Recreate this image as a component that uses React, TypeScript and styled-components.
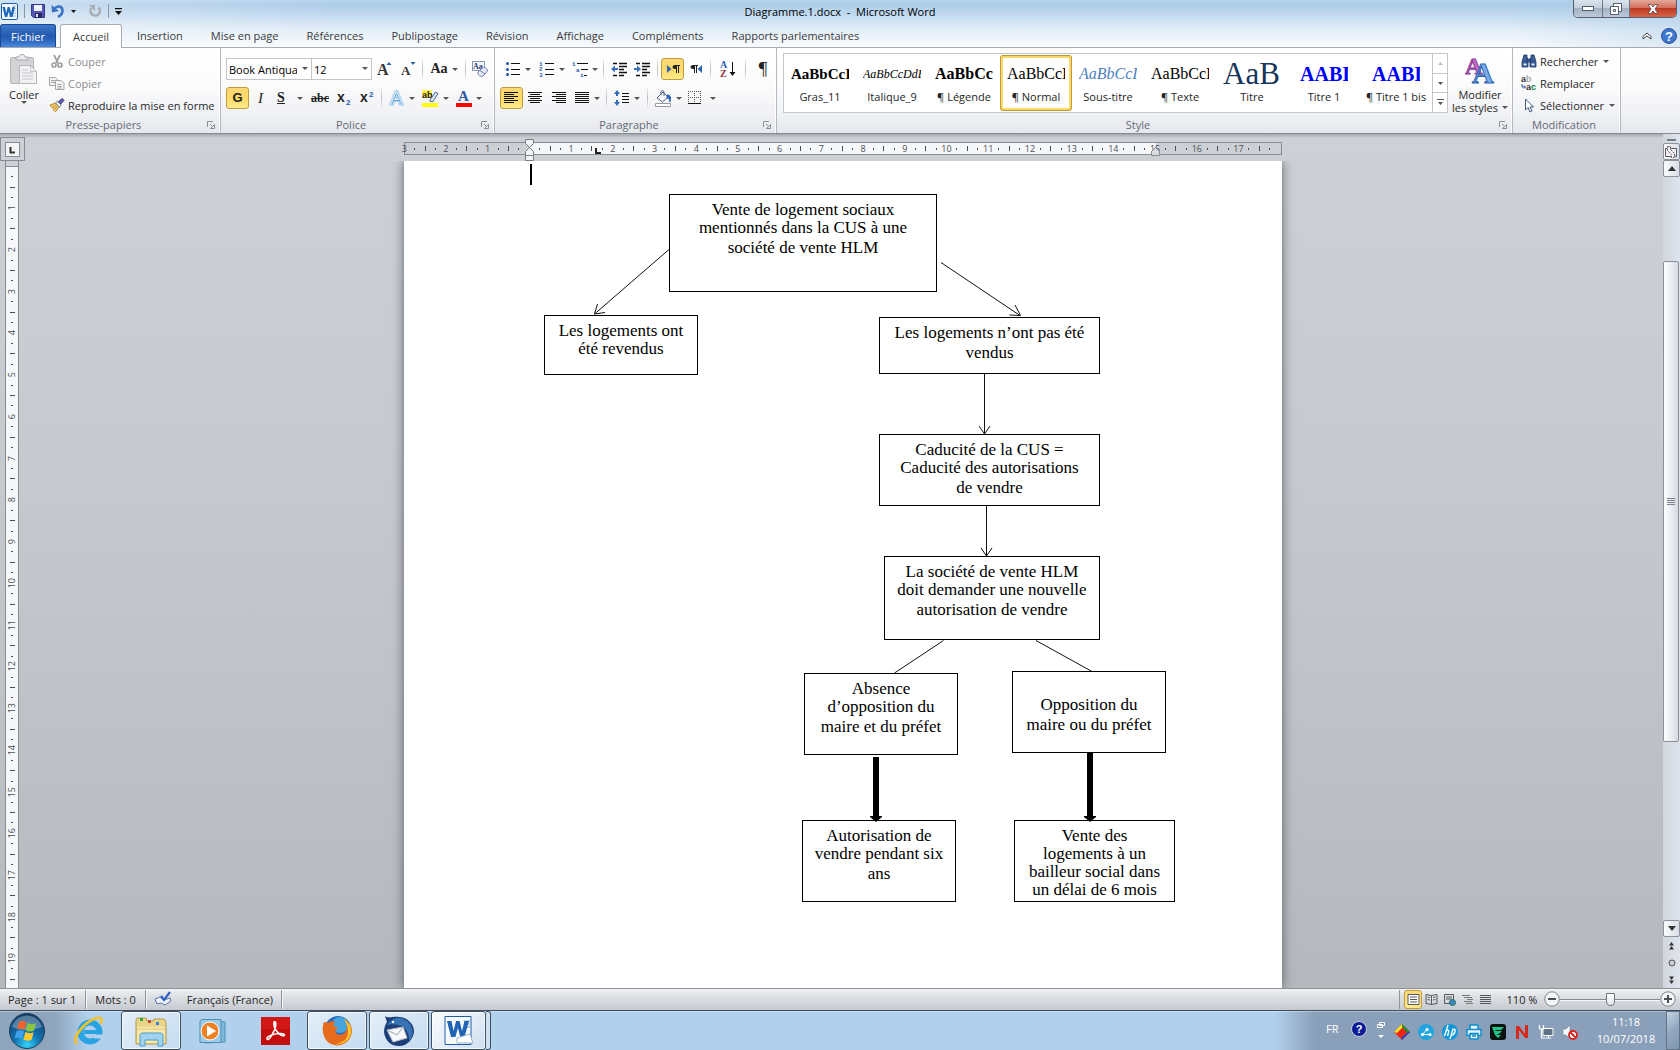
import React from "react";
import styled, { createGlobalStyle, css } from "styled-components";

const GlobalStyle = createGlobalStyle`
  * { box-sizing: border-box; }
  html, body { margin: 0; padding: 0; }
  body, button, select, input {
    font-family: "Open Sans", "Noto Sans", sans-serif;
    font-size: 11px;
    color: #262626;
  }
  button { margin: 0; padding: 0; border: 0; background: none; cursor: default; white-space: nowrap; }
  svg { display: block; flex: none; }
`;

const SERIF = '"Liberation Serif", serif';

/* ---------- window shell ---------- */

const Desktop = styled.div`
  display: flex;
  flex-direction: column;
  height: 100vh;
  overflow: hidden;
`;

const Chrome = styled.header`
  flex: none;
  background: linear-gradient(90deg, rgba(255, 255, 255, 0.35), rgba(255, 255, 255, 0) 20%, rgba(255, 255, 255, 0) 90%, rgba(160, 195, 225, 0.3)),
    linear-gradient(#b6d3ee, #aecdea 5px, #c4dbf0 16px, #e0ecf7 28px, #f9fbfd 47px);
`;

const TitleBar = styled.div`
  display: grid;
  grid-template-columns: 1fr auto 1fr;
  height: 24px;
`;

const QuickAccess = styled.div`
  display: flex;
  align-items: center;
  gap: 6px;
  padding-left: 1px;
  height: 22px;
`;

const Bar = styled.span`
  width: 1px;
  height: 14px;
  background: #8b97a5;
`;

const Title = styled.h1`
  margin: 0;
  font-size: 11px;
  font-weight: 400;
  line-height: 24px;
  color: #000;
  white-space: pre;
`;

const WindowButtons = styled.div`
  display: flex;
  justify-self: end;
  height: 18px;
  margin-right: 3px;
  border: 1px solid #56606c;
  border-top: 0;
  border-radius: 0 0 5px 5px;
  overflow: hidden;
`;

const WindowButton = styled.button<{ $w: number; $close?: boolean }>`
  display: flex;
  align-items: center;
  justify-content: center;
  width: ${(p) => p.$w}px;
  border-left: 1px solid #6b7684;
  background: ${(p) =>
    p.$close
      ? "linear-gradient(#e3a99c, #d4705c 45%, #bd3a22 50%, #d8654a)"
      : "linear-gradient(#dbe4ee, #c3cfdd 45%, #a3b2c3 50%, #bccadb)"};
  &:first-child { border-left: 0; }
`;

const TabStrip = styled.nav`
  display: flex;
  align-items: stretch;
  height: 24px;
  border-bottom: 1px solid #a8acb2;
`;

const FileTab = styled.button`
  width: 56px;
  border: 1px solid #1b4a96;
  border-bottom: 0;
  border-radius: 3px 3px 0 0;
  margin-right: 4px;
  background: linear-gradient(#3f78cb, #235aaf 50%, #2a66bd 70%, #4a8ade);
  color: #fff;
`;

const Tab = styled.button<{ $active?: boolean }>`
  padding: 0 14px 1px;
  color: #3b3b3b;
  ${(p) =>
    p.$active &&
    css`
      padding: 0 12px 1px;
      margin: 0 1px -1px 0;
      border: 1px solid #a8acb2;
      border-bottom: 0;
      border-radius: 3px 3px 0 0;
      background: #fff;
    `}
`;

const TabTools = styled.div`
  display: flex;
  align-items: center;
  gap: 9px;
  margin-left: auto;
  padding-right: 3px;
`;

/* ---------- ribbon ---------- */

const Ribbon = styled.div`
  display: flex;
  flex: none;
  height: 86px;
  border-bottom: 1px solid #868b92;
  background: linear-gradient(#fff, #fbfbfc 45%, #f1f2f5 75%, #e5e8ed);
`;

const Group = styled.section<{ $w: number }>`
  display: flex;
  flex-direction: column;
  width: ${(p) => p.$w}px;
  border-right: 1px solid #b4b8bf;
  box-shadow: inset -1px 0 #fff;
`;

const GroupBody = styled.div`
  display: flex;
  flex: 1;
  min-height: 0;
`;

const GroupFoot = styled.footer`
  display: flex;
  align-items: center;
  height: 17px;
  padding: 0 5px 0 0;
  color: #646a75;
  text-align: center;
`;

const GroupName = styled.span`
  flex: 1;
`;

const Rows = styled.div`
  display: flex;
  flex-direction: column;
  gap: 7px;
  padding: 10px 0 0 5px;
`;

const Row = styled.div`
  display: flex;
  align-items: center;
  height: 22px;
`;

const Tool = styled.button<{ $w: number; $on?: boolean }>`
  display: flex;
  align-items: center;
  justify-content: center;
  gap: 4px;
  width: ${(p) => p.$w}px;
  height: 22px;
  border-radius: 3px;
  ${(p) =>
    p.$on &&
    css`
      border: 1px solid #c29b3a;
      background: linear-gradient(#fbd977, #fcd966 45%, #fee98a);
    `}
`;

const Sep = styled.span`
  width: 1px;
  height: 20px;
  margin: 0 3px;
  background: linear-gradient(#eceef0, #b9bdc3 50%, #eceef0);
`;

const Caret = styled.span`
  flex: none;
  width: 0;
  height: 0;
  border: 3px solid transparent;
  border-top-color: #555;
  border-bottom: 0;
`;

const Combo = styled.label<{ $w: number }>`
  position: relative;
  width: ${(p) => p.$w}px;
  height: 22px;
  & + & { margin-left: -1px; }
  &::after {
    content: "";
    position: absolute;
    right: 4px;
    top: 9px;
    border: 3px solid transparent;
    border-top-color: #555;
    border-bottom: 0;
    pointer-events: none;
  }
`;

const ComboSelect = styled.select`
  appearance: none;
  width: 100%;
  height: 100%;
  padding: 0 14px 0 2px;
  border: 1px solid #c3c7cd;
  border-radius: 0;
  background: #fff;
  color: #000;
`;

const Glyph = styled.span<{ $size?: number; $b?: boolean; $i?: boolean; $sans?: boolean; $deco?: string }>`
  font-family: ${(p) => (p.$sans ? '"Liberation Sans", sans-serif' : SERIF)};
  font-size: ${(p) => p.$size ?? 15}px;
  line-height: 18px;
  font-weight: ${(p) => (p.$b ? 700 : 400)};
  font-style: ${(p) => (p.$i ? "italic" : "normal")};
  text-decoration: ${(p) => p.$deco ?? "none"};
  color: #222;
`;

const BigButton = styled.button<{ $w: number }>`
  display: flex;
  flex-direction: column;
  align-items: center;
  width: ${(p) => p.$w}px;
  padding-top: 4px;
  line-height: 13px;
`;

const BigLabel = styled.span`
  display: flex;
  align-items: center;
  gap: 4px;
`;

const IconSlot = styled.span`
  display: flex;
  align-items: center;
  justify-content: center;
  height: 36px;
`;

const Commands = styled.div<{ $pad?: number }>`
  display: flex;
  flex-direction: column;
  padding: 2px 0 0 ${(p) => p.$pad ?? 1}px;
`;

const Command = styled.button`
  display: flex;
  align-items: center;
  gap: 3px;
  height: 22px;
  & > ${Caret} { margin-left: 2px; }
  &:disabled { color: #8e8e8e; }
`;

const Gallery = styled.div`
  display: flex;
  height: 60px;
  margin: 5px 0 0 6px;
  border: 1px solid #c3c6cb;
  background: #fff;
`;

const StyleCard = styled.button<{ $on?: boolean }>`
  display: flex;
  flex-direction: column;
  align-items: center;
  width: 72px;
  margin: 1px 0;
  padding: 2px 3px 0;
  border: 3px solid transparent;
  ${(p) =>
    p.$on &&
    css`
      border-color: #fbd968;
      border-radius: 3px;
      outline: 1px solid #c4983a;
      outline-offset: -1px;
    `}
`;

const Sample = styled.span<{ $size: number; $w?: number; $b?: boolean; $i?: boolean; $color?: string }>`
  display: flex;
  align-items: center;
  width: ${(p) => p.$w ?? 58}px;
  height: 28px;
  overflow: hidden;
  font-family: ${SERIF};
  font-size: ${(p) => p.$size}px;
  line-height: 30px;
  font-weight: ${(p) => (p.$b ? 700 : 400)};
  font-style: ${(p) => (p.$i ? "italic" : "normal")};
  color: ${(p) => p.$color ?? "#000"};
`;

const StyleName = styled.span`
  line-height: 17px;
`;

const GalleryScroll = styled.div`
  display: flex;
  flex-direction: column;
  width: 15px;
  border-left: 1px solid #c3c6cb;
`;

const GalleryButton = styled.button`
  display: flex;
  flex: 1;
  align-items: center;
  justify-content: center;
  & + & { border-top: 1px solid #c3c6cb; }
`;

/* ---------- document area ---------- */

const Workspace = styled.main`
  display: grid;
  flex: 1;
  grid-template-columns: 25px 1fr 17px;
  min-height: 0;
  overflow: hidden;
  background: linear-gradient(#a4a8ae, #cdd1d6 4px, #c6c9ce 40%, #b5b9be);
`;

const LeftRail = styled.div`
  display: flex;
  flex-direction: column;
  min-height: 0;
  padding-top: 3px;
`;

const TabSelector = styled.button`
  display: flex;
  flex: none;
  align-items: center;
  justify-content: center;
  width: 25px;
  height: 24px;
  border: 1px solid #868c96;
  background: #cdd1d6;
`;

const VerticalRuler = styled.div`
  flex: 1;
  width: 14px;
  min-height: 0;
  margin-left: 5px;
  overflow: hidden;
  border: 1px solid #868c96;
  border-top: 0;
  border-bottom: 0;
  background: linear-gradient(#cdd1d6 5px, #868c96 5px, #868c96 6px, #f6f7f8 6px);
`;

const VerticalScale = styled.div`
  display: grid;
  grid-template-rows: repeat(20, minmax(0, 1fr));
  height: 834px;
`;

const VerticalCm = styled.div`
  display: grid;
  grid-template-rows: repeat(4, minmax(0, 1fr));
  place-items: center;
`;

const UpNumber = styled.span`
  writing-mode: vertical-rl;
  transform: rotate(180deg);
  font-size: 9px;
  line-height: 12px;
  color: #4b4f55;
`;

const Mark = styled.i<{ $w: number; $h: number }>`
  width: ${(p) => p.$w}px;
  height: ${(p) => p.$h}px;
  background: #4b4f55;
`;

const Centre = styled.div`
  display: flex;
  flex-direction: column;
  align-items: center;
  min-width: 0;
  min-height: 0;
  padding-right: 2px;
  overflow: hidden;
`;

const RulerBand = styled.div`
  position: relative;
  flex: none;
  width: 878px;
  height: 27px;
  padding-top: 8px;
`;

const HorizontalRuler = styled.div`
  height: 13px;
  border: 1px solid #868c96;
  background: linear-gradient(90deg, transparent 125px, #f6f7f8 125px, #f6f7f8 751px, transparent 751px);
`;

const HorizontalScale = styled.div`
  display: grid;
  grid-template-columns: repeat(21, 1fr);
  height: 11px;
  margin: 0 6px 0 -6px;
`;

const HorizontalCm = styled.div`
  display: grid;
  grid-template-columns: repeat(4, 1fr);
  place-items: center;
`;

const RulerNumber = styled.span`
  font-size: 9px;
  line-height: 11px;
  color: #4b4f55;
`;

const IndentMark = styled.span<{ $x: number; $y: number }>`
  position: absolute;
  left: ${(p) => p.$x}px;
  top: ${(p) => p.$y}px;
`;

const Canvas = styled.div`
  display: flex;
  flex: 1;
  justify-content: center;
  align-self: stretch;
  min-height: 0;
  overflow: hidden;
`;

const Paper = styled.article`
  position: relative;
  flex: none;
  width: 878px;
  background: #fff;
  box-shadow: 0 0 2px #8b8f95, 0 0 11px rgba(60, 65, 72, 0.75);
`;

const Cursor = styled.span`
  position: absolute;
  left: 126px;
  top: 3px;
  width: 2px;
  height: 21px;
  background: #000;
`;

const Connectors = styled.svg`
  position: absolute;
  left: 0;
  top: 0;
`;

const Node = styled.div<{ $x: number; $y: number; $w: number; $h: number; $blank?: boolean }>`
  position: absolute;
  left: ${(p) => p.$x}px;
  top: ${(p) => p.$y}px;
  width: ${(p) => p.$w}px;
  height: ${(p) => p.$h}px;
  padding-top: ${(p) => (p.$blank ? 24 : 6)}px;
  border: 1px solid #000;
  background: #fff;
  font-family: ${SERIF};
  font-size: 17px;
  line-height: 18px;
  color: #000;
  text-align: center;
  white-space: nowrap;
`;

const Line = styled.div<{ $tall?: boolean }>`
  line-height: ${(p) => (p.$tall ? 22 : 18)}px;
`;

/* ---------- scroll bar ---------- */

const ScrollRail = styled.div`
  display: flex;
  flex-direction: column;
  align-items: center;
  min-height: 0;
  padding-top: 3px;
  background: linear-gradient(90deg, #d2d6dd, #dfe3ec);
`;

const SplitHandle = styled.span`
  width: 9px;
  height: 2px;
  margin: 2px 0;
  background: #777b82;
`;

const RailButton = styled.button<{ $plain?: boolean }>`
  display: flex;
  flex: none;
  align-items: center;
  justify-content: center;
  width: 17px;
  height: 17px;
  ${(p) =>
    !p.$plain &&
    css`
      border: 1px solid #8b919c;
      border-radius: 2px;
      background: linear-gradient(90deg, #fbfcfd, #d9dde4);
    `}
`;

const Track = styled.div`
  display: flex;
  flex: 1;
  flex-direction: column;
  width: 17px;
  min-height: 0;
`;

const TrackSpace = styled.div<{ $grow: number }>`
  flex: ${(p) => p.$grow} 1 0;
`;

const Thumb = styled.div`
  display: flex;
  flex: 481 1 0;
  align-items: center;
  justify-content: center;
  width: 16px;
  border: 1px solid #8b919c;
  border-radius: 2px;
  background: linear-gradient(90deg, #fff, #eef1f4 40%, #d6dae2);
`;

/* ---------- status bar ---------- */

const StatusBar = styled.footer`
  display: flex;
  flex: none;
  align-items: center;
  height: 22px;
  padding-bottom: 1px;
  border-top: 1px solid #8e9298;
  background: linear-gradient(#f0f2f4, #dcdfe3 40%, #c6cad0);
`;

const StatusItem = styled.button`
  display: flex;
  align-items: center;
  gap: 15px;
  height: 19px;
  padding: 0 9px;
  border-right: 1px solid #8f949b;
  box-shadow: 1px 0 #f5f6f7;
  &:first-child { padding-left: 8px; }
  &:nth-child(3) { padding: 0 8px; }
`;

const StatusRight = styled.div`
  display: flex;
  align-items: center;
  margin-left: auto;
  height: 19px;
  padding: 0 4px;
  border-left: 1px solid #8f949b;
`;

const ViewButton = styled.button<{ $on?: boolean }>`
  display: flex;
  align-items: center;
  justify-content: center;
  width: 18px;
  height: 19px;
  border: 1px solid transparent;
  border-radius: 3px;
  ${(p) =>
    p.$on &&
    css`
      border-color: #c29b3a;
      background: linear-gradient(#fbd977, #fee98a);
    `}
`;

const ZoomText = styled.button`
  width: 40px;
  margin: 0 2px 0 8px;
  text-align: center;
`;

const ZoomSlider = styled.input`
  appearance: none;
  width: 100px;
  height: 17px;
  margin: 0;
  background: linear-gradient(transparent 8px, #858b94 8px, #858b94 9px, #f4f5f6 9px, #f4f5f6 10px, transparent 10px);
  &::-webkit-slider-thumb {
    appearance: none;
    width: 9px;
    height: 13px;
    border: 1px solid #6d737c;
    border-radius: 1px 1px 5px 5px;
    background: linear-gradient(#fff, #e3e6ea);
  }
`;

/* ---------- taskbar ---------- */

const Taskbar = styled.footer`
  display: flex;
  flex: none;
  align-items: stretch;
  height: 40px;
  border-top: 1px solid #3e4c5c;
  background: linear-gradient(rgba(255, 255, 255, 0.35) 1px, transparent 1px),
    linear-gradient(90deg, #8fa5bd, #8fa5bd 55px, #b1d0ec 88px, #b1d0ec calc(100% - 405px), #8aa0ba calc(100% - 365px), #8aa0ba);
`;

const StartButton = styled.button`
  display: flex;
  align-items: center;
  justify-content: center;
  width: 54px;
  margin-right: 5px;
`;

const TaskButton = styled.button<{ $open?: boolean; $active?: boolean }>`
  display: flex;
  align-items: center;
  justify-content: center;
  width: 60px;
  margin-right: 2px;
  border: 1px solid transparent;
  ${(p) =>
    p.$open &&
    css`
      border-color: #3f5064;
      border-radius: 3px;
      box-shadow: inset 0 0 0 1px rgba(255, 255, 255, 0.7);
      background: linear-gradient(135deg, rgba(255, 255, 255, 0.65), rgba(255, 255, 255, 0.25));
    `}
  ${(p) =>
    p.$active &&
    css`
      width: 55px;
      background: linear-gradient(135deg, #fafcfe, #cfe0f1);
    `}
`;

const StackEdge = styled.span`
  width: 5px;
  margin-left: -2px;
  border: 1px solid #3f5064;
  border-left: 0;
  border-radius: 0 3px 3px 0;
  background: #cfe0f1;
`;

const Tray = styled.div`
  display: flex;
  align-items: center;
  margin-left: auto;
  color: #fff;
`;

const TrayIcons = styled.div`
  display: flex;
  align-items: center;
  gap: 8px;
  padding: 2px 0 0 9px;
`;

const TrayButton = styled.button`
  display: flex;
  align-items: center;
  justify-content: center;
  width: 16px;
  height: 18px;
`;

const Language = styled.button`
  width: 25px;
  color: #fff;
  text-align: left;
`;

const LanguageTools = styled.div`
  display: flex;
  align-items: center;
  padding-bottom: 4px;
`;

const Clock = styled.time`
  display: block;
  width: 80px;
  margin-left: 8px;
  padding-bottom: 1px;
  line-height: 17px;
  text-align: center;
`;

const ShowDesktop = styled.button`
  align-self: stretch;
  width: 14px;
  border: 1px solid #5f7388;
  background: linear-gradient(135deg, #c5d4e3, #93a8c0 50%, #7f96b0);
`;

/* ---------- drawings ---------- */

const Launcher = () => (
  <svg width="8" height="8" viewBox="0 0 8 8" fill="none" stroke="#8a8e95">
    <path d="M.5 6V.5H6M3 3l3 3M7.5 3.5v4h-4z" />
  </svg>
);

const Word = () => (
  <svg width="17" height="17" viewBox="0 0 17 17">
    <rect x=".5" y=".5" width="16" height="16" rx="1.5" fill="#f4f9fe" stroke="#1f5ba8" />
    <path d="M11 3h4M12 5.500h3M13 8h2M12 10.500h3M11 13h4" stroke="#9ebfe4" />
    <path d="M1.500 4h2.500l1.200 6L6.700 4h2l1.400 6 1.300-6H14l-2.500 10H9L7.700 8.500 6.300 14H3.900z" fill="#1d66b8" />
  </svg>
);

const Save = () => (
  <svg width="14" height="14" viewBox="0 0 14 14">
    <path d="M.5.5h13v13h-11l-2-2z" fill="#5457b8" stroke="#34378c" />
    <path d="M3 1h8v6H3z" fill="#eef2fb" />
    <path d="M4 9h7v4.500H4z" fill="#27295f" />
    <path d="M5 10h2v3H5z" fill="#dfe3f4" />
  </svg>
);

const Undo = () => (
  <svg width="14" height="14" viewBox="0 0 14 14">
    <path d="M3 5.500C6 1 11.500 2 11.500 6.500c0 3-1.500 5-4.500 6.500" fill="none" stroke="#3d74c4" strokeWidth="2.600" />
    <path d="M.5 1l.500 7.500L8 7z" fill="#3d74c4" />
  </svg>
);

const Redo = () => (
  <svg width="14" height="14" viewBox="0 0 14 14">
    <path d="M10.500 3.500A4.700 4.700 0 1 1 3.500 4" fill="none" stroke="#a9adb3" strokeWidth="2.600" />
    <path d="M1 1h6v6L5 5z" fill="#a9adb3" />
  </svg>
);

const Paste = () => (
  <svg width="28" height="32" viewBox="0 0 28 32">
    <rect x=".5" y="3.500" width="23" height="26" rx="1.500" fill="#d3d4d6" stroke="#b3b4b7" />
    <path d="M6 6V3h3c0-3.500 6-3.500 6 0h3v3z" fill="#ececee" stroke="#a5a6a9" />
    <path d="M9.500 11.500h11l6 6v12h-17z" fill="#f2f2f4" stroke="#b6b7ba" />
    <path d="M20.500 11.500v6h6M12 16h6M12 19h11M12 22h11M12 25h11" fill="none" stroke="#c6c7ca" />
  </svg>
);

const Cut = () => (
  <svg width="16" height="16" viewBox="0 0 16 16" fill="none" stroke="#a0a1a4" strokeWidth="1.700">
    <path d="M5 2l4 8M11 2L7 10" />
    <circle cx="5" cy="12" r="2" />
    <circle cx="11" cy="12" r="2" />
  </svg>
);

const Copy = () => (
  <svg width="16" height="16" viewBox="0 0 16 16" fill="#f4f4f5" stroke="#a3a4a7">
    <path d="M.5 2.500h6l2 2v6h-8zM2 5.500h4M2 7.500h4" />
    <path d="M6.500 5.500h5.500l3 3v6H6.500zM8.500 9.500h4M8.500 11.500h4M8.500 13h4" />
  </svg>
);

const Brush = () => (
  <svg width="16" height="16" viewBox="0 0 17 16">
    <path d="M1 8l6-2 4 4-4 5c-2-.500-2-2-3-3.500C3 10 1.500 9.500 1 8z" fill="#f2cf6c" stroke="#b48a2c" />
    <path d="M4 9l4 4M6 8l3 3" stroke="#b48a2c" />
    <path d="M7 5.500l2-1.500 4 4-2 2.500z" fill="#f5f6f8" stroke="#6f7580" />
    <path d="M10 4.500L14 1l2 2-3.500 4z" fill="#5f5fb0" stroke="#3a3c7e" />
  </svg>
);

const SizeA = ({ up }: { up?: boolean }) => (
  <svg width="15" height="18" viewBox="0 0 15 18">
    <text x="0" y="15" fontFamily="Liberation Serif" fontWeight="700" fontSize={up ? 16 : 13} fill="#333">A</text>
    <path d={up ? "M9.500 5h5L12 2z" : "M9.500 2h5L12 5z"} fill="#2e5ea8" />
  </svg>
);

const Eraser = () => (
  <svg width="17" height="18" viewBox="0 0 17 18">
    <rect x=".5" y="1.500" width="12" height="9" fill="#f5f8fd" stroke="#8797b5" />
    <text x="1" y="9" fontFamily="Liberation Serif" fontWeight="700" fontSize="8" fill="#27376b">Aa</text>
    <path d="M6 12l5-4.500c2-1 5 1.500 4.500 3.500L11 16c-2 1.500-6-1-5-4z" fill="#e1e7f5" stroke="#7483ac" />
    <path d="M8 10.500l5 3.500" stroke="#7483ac" />
  </svg>
);

const Script = ({ sup }: { sup?: boolean }) => (
  <svg width="14" height="18" viewBox="0 0 14 18" fontFamily="Liberation Sans" fontWeight="700">
    <text x="0" y="13" fontSize="14" fill="#222">x</text>
    <text x="9" y={sup ? 8 : 16} fontSize="8" fill="#2257ad">2</text>
  </svg>
);

const GlowA = () => (
  <svg width="17" height="18" viewBox="0 0 17 18">
    <text x="3" y="15" fontFamily="Liberation Sans" fontSize="16" fill="#fff" stroke="#a9d2f0" strokeWidth="3" paintOrder="stroke">A</text>
    <path d="M4 15l4.500-11L13 15M5.500 11.500h6" fill="none" stroke="#4a92cf" strokeWidth=".800" />
  </svg>
);

const Highlight = () => (
  <svg width="17" height="18" viewBox="0 0 17 18">
    <rect x="0" y="1" width="10" height="8" fill="#fff04c" />
    <text x="0" y="9" fontFamily="Liberation Sans" fontSize="9" fontWeight="700" fill="#222">ab</text>
    <path d="M8 11l5.500-8 2.500 1.500L11 12.500H8z" fill="#dbe7f6" stroke="#4b658e" />
    <rect x="0" y="14" width="16" height="4" fill="#ffff00" />
  </svg>
);

const FontColor = () => (
  <svg width="16" height="18" viewBox="0 0 16 18">
    <text x="2" y="12" fontFamily="Liberation Serif" fontWeight="700" fontSize="15" fill="#2d5a9e">A</text>
    <rect x="0" y="14" width="16" height="4" fill="#f00" />
  </svg>
);

const ListIcon = ({ kind }: { kind: "dot" | "num" | "multi" }) => (
  <svg width="16" height="16" viewBox="0 0 16 16" fontFamily="Liberation Mono" fontSize="6" fontWeight="700">
    {kind === "multi" ? (
      <>
        <path d="M5 2.500h11M9 8.500h7M12 14.500h3" stroke="#111" />
        <g fill="#2c5cab"><text x="0" y="5">1</text><text x="4" y="11">a</text><text x="8" y="16">i</text></g>
      </>
    ) : (
      <>
        <path d="M6 2.500h9M6 8.500h9M6 13.500h9" stroke="#111" />
        {kind === "dot" ? (
          <g fill="#2c5cab"><circle cx="2.500" cy="2.500" r="1.600" /><circle cx="2.500" cy="8.500" r="1.600" /><circle cx="2.500" cy="13.500" r="1.600" /></g>
        ) : (
          <g fill="#2c5cab"><text x="0" y="5">1</text><text x="0" y="10">2</text><text x="0" y="16">3</text></g>
        )}
      </>
    )}
  </svg>
);

const Indent = ({ out }: { out?: boolean }) => (
  <svg width="17" height="15" viewBox="0 0 17 15">
    <path d="M2 1.500h4M8 1.500h8M8 4.500h8M8 7.500h5M8 10.500h8M2 13.500h4M8 13.500h5" stroke="#111" strokeWidth="1.300" />
    <path d={out ? "M0 7l4-3.500v2.500h3v2H4v2.500z" : "M7 7L3 3.500V6H0v2h3v2.500z"} fill="#3d6fc0" />
  </svg>
);

const Pilcrow = ({ dir }: { dir: "ltr" | "rtl" }) => (
  <svg width="14" height="12" viewBox="0 0 14 12">
    <path d={dir === "ltr" ? "M1 2l4.500 4L1 10z" : "M13 2L8.500 6l4.500 4z"} fill="#2f65b8" />
    <path d={dir === "ltr" ? "M10 2.500H8.500a1.500 1.500 0 0 0 0 3H10z" : "M5 2.500H3.500a1.500 1.500 0 0 0 0 3H5z"} fill="#222" stroke="#222" />
    <path d={dir === "ltr" ? "M9 2.500h5M10.500 2v8M12.500 2v8" : "M4 2.500h5M5.500 2v8M7.500 2v8"} fill="none" stroke="#222" />
  </svg>
);

const SortIcon = () => (
  <svg width="16" height="18" viewBox="0 0 16 18" fontFamily="Liberation Serif" fontWeight="700" fontSize="10">
    <text x="0" y="8" fill="#2c5cab">A</text>
    <text x="0" y="17" fill="#93323c">Z</text>
    <path d="M12.500 2v12" stroke="#111" />
    <path d="M9.500 12h6l-3 4z" fill="#111" />
  </svg>
);

const AlignIcon = ({ kind }: { kind: "left" | "center" | "right" | "full" }) => {
  const x = { left: 0, center: 2, right: 4, full: 0 }[kind];
  const w = kind === "full" ? 14 : 10;
  return (
    <svg width="15" height="12" viewBox="0 0 15 12" fill="#111">
      {[0, 4, 8].map((y) => <rect key={y} x="0" y={y} width="14" height="1" />)}
      {[2, 6, 10].map((y) => <rect key={y} x={x} y={y} width={w} height="1" />)}
    </svg>
  );
};

const LineSpacing = () => (
  <svg width="16" height="16" viewBox="0 0 16 16">
    <path d="M8 3.500h7M8 6.500h7M8 9.500h7M8 12.500h7" stroke="#111" />
    <path d="M3 0l3 4H4v2H2V4H0zM3 16l-3-4h2v-2h2v2h2z" fill="#3369bb" />
  </svg>
);

const Bucket = () => (
  <svg width="17" height="17" viewBox="0 0 17 17">
    <path d="M2 8l6-6 5 5-5.500 5z" fill="#f4f7fb" stroke="#4d5f80" />
    <path d="M6 5V1.500c1-1.500 3-1 3 1V6" fill="none" stroke="#4d5f80" />
    <path d="M12 5c4 0 4 3 3 7-.500-3-1-4-3-4z" fill="#2f65b8" stroke="#2f65b8" />
    <path d="M.5 13.500h15v3H.5z" fill="#fff" stroke="#999" />
  </svg>
);

const Borders = () => (
  <svg width="14" height="14" viewBox="0 0 14 14" fill="none" stroke="#555">
    <path d="M.5 0v12M12.500 0v12M6.500 0v12M0 .5h13M0 6.500h13" strokeDasharray="1 1" />
    <path d="M0 12.500h13" stroke="#111" />
  </svg>
);

const ChangeStyles = () => (
  <svg width="31" height="31" viewBox="0 0 31 31" fontFamily="Liberation Serif" fontWeight="700">
    <text x="0" y="19" fontSize="24" fill="#c56bc4" stroke="#8f3f98">A</text>
    <text x="7" y="28" fontSize="30" fill="#79aeea" stroke="#2c62ae">A</text>
  </svg>
);

const Binoculars = () => (
  <svg width="16" height="14" viewBox="0 0 16 14" fill="#3c5c98" stroke="#1d3566" strokeWidth=".800">
    <path d="M3 1h3v2l1 3v7H1V8zM10 1h3l2 7v5H9V6l1-3z" />
    <path d="M6 5h4v3H6z" />
    <path d="M2.500 9.500h3v2h-3zM10.500 9.500h3v2h-3z" fill="#dfe9f8" stroke="none" />
  </svg>
);

const Replace = () => (
  <svg width="16" height="16" viewBox="0 0 16 16" fontFamily="Liberation Sans" fontWeight="700" fontSize="9">
    <text x="0" y="7" fill="#333">a<tspan fill="#aaa">b</tspan></text>
    <text x="5" y="15" fill="#333">a<tspan fill="#12833a">c</tspan></text>
    <path d="M1 9v3h3M3 10.500l1.500 1.500L3 13.500" fill="none" stroke="#234f96" />
  </svg>
);

const Pointer = () => (
  <svg width="16" height="15" viewBox="0 0 16 15">
    <path d="M4.500 1v11l2.500-2.500L9 14l2-1-2-4h3.500z" fill="#fff" stroke="#3d557f" />
  </svg>
);

const Triangle = ({ up, w = 8, c = "#333" }: { up?: boolean; w?: number; c?: string }) => (
  <svg width={w} height={w > 5 ? 5 : 3} viewBox="0 0 8 5" preserveAspectRatio="none">
    <path d={up ? "M0 5h8L4 0z" : "M0 0h8L4 5z"} fill={c} />
  </svg>
);

const DoubleTriangle = ({ up }: { up?: boolean }) => (
  <svg width="5" height="8" viewBox="0 0 7 8" preserveAspectRatio="none" fill="#333">
    <path d={up ? "M0 3.500h7L3.500 0zM0 7.500h7L3.500 4z" : "M0 .5h7L3.500 4zM0 4.500h7L3.500 8z"} />
  </svg>
);

const ZoomKnob = ({ plus }: { plus?: boolean }) => (
  <svg width="16" height="16" viewBox="0 0 16 16">
    <circle cx="8" cy="8" r="7.200" fill="#f4f5f7" stroke="#7c828b" />
    <path d={plus ? "M4 8h8M8 4v8" : "M4 8h8"} stroke="#4b5058" strokeWidth="2" />
  </svg>
);

const ProofIcon = () => (
  <svg width="18" height="16" viewBox="0 0 18 16">
    <path d="M1 8l5-2 4 3 6-2 1 3-6 4-4-2-4 1z" fill="#eef2fa" stroke="#5d73a8" />
    <path d="M7 5l3 4 6-8" fill="none" stroke="#2e62c4" strokeWidth="2.200" />
  </svg>
);

const ViewIcon = ({ kind }: { kind: number }) => (
  <svg width="13" height="13" viewBox="0 0 13 13" fill="none" stroke="#55595f">
    {kind === 0 && <path d="M1 1.500h11v10H1zM3 4h7M3 6.500h7M3 9h7" fill="#fff" />}
    {kind === 1 && <path d="M6.500 2.500L1 1.500v9l5.500 1 5.500-1v-9zM6.500 2.500v9M2.500 4l2.500.5M2.500 6.500l2.500.5M8 4.500l2.500-.5M8 7l2.500-.5" />}
    {kind === 2 && (
      <>
        <path d="M1.500 1.500h9v9h-9zM3 4h6M3 6h6" />
        <circle cx="9.500" cy="9.500" r="3" fill="#3c86c9" stroke="#2a7350" />
      </>
    )}
    {kind === 3 && <path d="M1 2.500h8M3 4.500h8M6 6.500h6M3 8.500h8M5 10.500h7" stroke="#777" />}
    {kind === 4 && <path d="M1 2.500h11M1 4.500h11M1 6.500h11M1 8.500h11M1 10.500h11" />}
  </svg>
);

const StartOrb = () => (
  <svg width="38" height="38" viewBox="0 0 38 38">
    <defs>
      <radialGradient id="orb" cx=".5" cy=".9" r=".9">
        <stop offset="0" stopColor="#35d4fb" />
        <stop offset=".4" stopColor="#1275b3" />
        <stop offset="1" stopColor="#123c66" />
      </radialGradient>
    </defs>
    <circle cx="19" cy="19" r="17.500" fill="url(#orb)" stroke="#1d3d59" />
    <path d="M4 15a15.500 15.500 0 0 1 30 0c-9 4-21 4-30 0z" fill="#fff" opacity=".28" />
    <path d="M11 10c3-1.500 5-1 7.500.5L16.500 18c-2.500-1.500-5-1.500-7.500-.5z" fill="#f0642c" />
    <path d="M19.800 11c3 1.500 5 1.500 8.200.2L26 18.600c-3 1.300-5.500 1.300-8.200-.2z" fill="#8cc63f" />
    <path d="M8.600 19c3-1.200 5-1 7.500.4l-2 7.600c-2.500-1.500-5-1.500-7.500-.5z" fill="#3fa0e8" />
    <path d="M17.400 20c3 1.500 5.400 1.500 8.200.2l-2 7.500c-3 1.300-5.500 1.300-8.200-.2z" fill="#fdc92d" />
  </svg>
);

const Explorer = () => (
  <svg width="34" height="32" viewBox="0 0 34 32">
    <path d="M2 8V5l1-2h9l1 3h6l1-2h10l2 3v22H2z" fill="#e9d48a" stroke="#b29a4b" />
    <path d="M3 10h28v18H3z" fill="#f7e9ad" />
    <path d="M3 14h28M3 11h28" stroke="#ddc777" />
    <path d="M6 3h3v3H6z" fill="#2eaa3c" /><path d="M14 5h3v3h-3z" fill="#cf4431" /><path d="M22 7h3v3h-3z" fill="#3084d8" />
    <path d="M6 31V21c0-2 1-3 3-3h17c2 0 3 1 3 3v10h-5v-6H11v6z" fill="#9fd3ee" stroke="#4c9cc9" />
  </svg>
);

const InternetExplorer = () => (
  <svg width="32" height="32" viewBox="0 0 32 32">
    <circle cx="17" cy="17" r="9.500" fill="none" stroke="#2aa3e2" strokeWidth="6" />
    <path d="M11 17h16" stroke="#2aa3e2" strokeWidth="4" />
    <path d="M20 19.500h10v4H21z" fill="#b1d0ec" />
    <path d="M4 29C-2 23 12 6 24 3c5-1 6 2 3.500 6" fill="none" stroke="#f4c326" strokeWidth="2.600" />
  </svg>
);

const MediaPlayer = () => (
  <svg width="30" height="28" viewBox="0 0 30 28">
    <path d="M7 3l20 2v20L7 26z" fill="#7fb9dd" stroke="#4e8fb8" />
    <path d="M4 2.500h19v23H2V4z" fill="#9ccbe8" stroke="#4e8fb8" />
    <circle cx="12" cy="14" r="9" fill="#f08122" stroke="#fff" />
    <path d="M9 8.500v11l9-5.500z" fill="#fff" />
  </svg>
);

const Acrobat = () => (
  <svg width="29" height="28" viewBox="0 0 29 28">
    <rect width="29" height="28" fill="#c40d0d" />
    <rect width="29" height="12" fill="#df2322" opacity=".5" />
    <path d="M13 5c3-1 2 6-1 11-2 4-5 8-6 6-1-3 9-6 14-5.500 5 .5 4 3 1 2-4-1-9-8-8-13.500z" fill="none" stroke="#fff" strokeWidth="1.600" />
  </svg>
);

const Firefox = () => (
  <svg width="31" height="31" viewBox="0 0 31 31">
    <circle cx="16" cy="14" r="13" fill="#2a6bb8" />
    <circle cx="18" cy="10" r="8" fill="#48a4de" />
    <path d="M2 7l4 1c2-2 5-2 7-1l-2 4c2 1 4 1 5 2l-3 3c1 5 8 5 11 0 2-4 1-8-2-12 8 4 10 12 6 19-5 9-18 10-24 2C0 19 0 12 2 7z" fill="#e66b1c" />
    <path d="M22 4c8 5 9 13 5 19-3 5-9 7-14 6 9-1 13-6 13-12 0-5-1-8-4-13z" fill="#f9c32e" />
  </svg>
);

const Thunderbird = () => (
  <svg width="32" height="32" viewBox="0 0 32 32">
    <path d="M2 1c4 3 8 0 14 1 8 0 15 7 15 14S25 31 16 31 2 25 1 17c0-4 1-7 3-10z" fill="#1c3f78" />
    <path d="M4 10C9 2 20 0 27 9c4 6 3 13-1 18 1-8-3-15-11-17-4-1-7-1-11 0z" fill="#3874b5" />
    <path d="M4 15l16-3 4 11-14 4z" fill="#f7f8fa" stroke="#b7bcc7" />
    <path d="M4 15l10 5 6-8" fill="none" stroke="#9aa1ae" />
    <circle cx="10" cy="7" r="1.200" fill="#fff" />
  </svg>
);

const WordTask = () => (
  <svg width="31" height="31" viewBox="0 0 31 31">
    <path d="M2 1.500h26v28H2z" fill="#f7fafd" stroke="#215ca6" />
    <path d="M21 6h6M22 9h5M23 12h4" stroke="#7ba4d4" />
    <path d="M4 6h4.500l2 10 2.600-10h3.500l2.400 10L21.500 6H26l-4.500 16h-4.200L14.900 13l-2.500 9H8z" fill="#1f63b4" />
    <path d="M14 23l13-4 3 9H14z" fill="#fff" stroke="#9fb4cf" />
  </svg>
);

const TrayArt = ({ n }: { n: number }) => (
  <svg width="16" height="16" viewBox="0 0 16 16">
    {n === 0 && <><path d="M8 0l8 8-8 8-8-8z" fill="#f22410" /><path d="M8 0L0 8l3 1 7-7z" fill="#f6e42a" /><path d="M8 0l8 8-2 2-6-7z" fill="#1c8e33" /><path d="M16 8l-8 8-1-2 7-6z" fill="#204ac0" /></>}
    {n === 1 && <><circle cx="8" cy="8" r="8" fill="#22a5df" /><path d="M12 10.500H4.500L9 5.500" fill="none" stroke="#fff" /><circle cx="9" cy="5.500" r="1.600" fill="#fff" /><circle cx="4.500" cy="10.500" r="1.600" fill="#fff" /><circle cx="12" cy="10.500" r="1.600" fill="#fff" /></>}
    {n === 2 && <><circle cx="8" cy="8" r="8" fill="#0e96d8" /><path d="M6 1L2.500 12M4 7c3-2 3 0 2.500 1.500L5.500 12M11 5L8 15M10 5.500c3-1 3.500 0 3 2s-1.500 4-4 3.500" fill="none" stroke="#fff" strokeWidth="1.400" /></>}
    {n === 3 && <path d="M4 5V1h8v4M1 5.500h14v6h-3v-2H4v2H1zM4 10h8v5H4zM6 12h4" fill="#e7f5fc" stroke="#0d8fcd" strokeWidth="1.500" />}
    {n === 4 && <><rect width="16" height="16" rx="3" fill="#0a1210" /><path d="M2 3h12l-3 3H5l1 1h6l-3 3H7l1 1h3l-3 3-3-3z" fill="#1cc68a" /></>}
    {n === 5 && <path d="M2 15V2h3l6 8V1h3v13h-3L5 6v9z" fill="#d8281c" />}
    {n === 6 && <><path d="M5 4.500h10v7H5zM8 14h5M10.500 12v2" fill="#5f7287" stroke="#fff" /><path d="M1.500 1v4h4V1M3.500 5v9h4" fill="none" stroke="#fff" strokeWidth="1.200" /></>}
    {n === 7 && <><path d="M1 5h3l4-4v14l-4-4H1z" fill="#f5f7f9" stroke="#707c8a" strokeWidth=".600" /><circle cx="11" cy="11" r="4" fill="#fff" stroke="#e0201a" strokeWidth="1.800" /><path d="M8 8l6 6" stroke="#e0201a" strokeWidth="1.800" /></>}
  </svg>
);

/* ---------- data ---------- */

const TABS = ["Accueil", "Insertion", "Mise en page", "Références", "Publipostage", "Révision", "Affichage", "Compléments", "Rapports parlementaires"];

const STYLES = [
  { name: "Gras_11", text: "AaBbCcI", size: 15, b: true },
  { name: "Italique_9", text: "AaBbCcDdE", size: 12, i: true },
  { name: "¶ Légende", text: "AaBbCc", size: 16, b: true },
  { name: "¶ Normal", text: "AaBbCcI", size: 16, on: true },
  { name: "Sous-titre", text: "AaBbCcI", size: 16, i: true, color: "#4f81bd" },
  { name: "¶ Texte", text: "AaBbCcI", size: 16 },
  { name: "Titre", text: "AaB", size: 31, color: "#17365d" },
  { name: "Titre 1", text: "AABI", size: 20, w: 48, b: true, color: "#0000ff" },
  { name: "¶ Titre 1 bis", text: "AABI", size: 20, w: 48, b: true, color: "#0000ff" },
];

const NODES = [
  { x: 265, y: 33, w: 268, h: 98, tall: true, lines: ["Vente de logement sociaux", "mentionnés dans la CUS à une", "société de vente HLM"] },
  { x: 140, y: 154, w: 154, h: 60, lines: ["Les logements ont", "été revendus"] },
  { x: 475, y: 156, w: 221, h: 57, tall: true, lines: ["Les logements n’ont pas été", "vendus"] },
  { x: 475, y: 273, w: 221, h: 72, tall: true, lines: ["Caducité de la CUS =", "Caducité des autorisations", "de vendre"] },
  { x: 480, y: 395, w: 216, h: 84, tall: true, lines: ["La société de vente HLM", "doit demander une nouvelle", "autorisation de vendre"] },
  { x: 400, y: 512, w: 154, h: 82, tall: true, lines: ["Absence", "d’opposition du", "maire et du préfet"] },
  { x: 608, y: 510, w: 154, h: 82, tall: true, blank: true, lines: ["Opposition du", "maire ou du préfet"] },
  { x: 398, y: 659, w: 154, h: 82, tall: true, lines: ["Autorisation de", "vendre pendant six", "ans"] },
  { x: 610, y: 659, w: 161, h: 82, lines: ["Vente des", "logements à un", "bailleur social dans", "un délai de 6 mois"] },
];

const MARKS = Array.from({ length: 21 }, (_, i) => Math.abs(i - 3));

/* ---------- sections ---------- */

const GroupFooter = ({ label, launcher = true }: { label: string; launcher?: boolean }) => (
  <GroupFoot>
    <GroupName>{label}</GroupName>
    {launcher && <button aria-label={`Options ${label}`}><Launcher /></button>}
  </GroupFoot>
);

const Header = () => (
  <Chrome>
    <TitleBar>
      <QuickAccess>
        <Word />
        <Bar />
        <button aria-label="Enregistrer"><Save /></button>
        <button aria-label="Annuler"><Undo /></button>
        <Triangle w={5} c="#111" />
        <span />
        <button aria-label="Répéter"><Redo /></button>
        <Bar />
        <button aria-label="Personnaliser">
          <svg width="7" height="7" viewBox="0 0 7 7"><path d="M0 0h7v1.300H0zM0 3h7L3.500 7z" fill="#111" /></svg>
        </button>
      </QuickAccess>
      <Title>Diagramme.1.docx  -  Microsoft Word</Title>
      <WindowButtons>
        <WindowButton $w={28} aria-label="Réduire">
          <svg width="12" height="5" viewBox="0 0 12 5"><rect x=".5" y=".5" width="11" height="4" fill="#fff" stroke="#535c68" /></svg>
        </WindowButton>
        <WindowButton $w={27} aria-label="Restaurer">
          <svg width="12" height="12" viewBox="0 0 12 12" fill="#fff" stroke="#535c68"><path d="M3.500.5h8v8h-8z" /><path d="M.5 3.500h8v8h-8z" /><path d="M3.500 6.500h2v2h-2z" /></svg>
        </WindowButton>
        <WindowButton $w={47} $close aria-label="Fermer">
          <svg width="12" height="10" viewBox="0 0 12 10"><path d="M1 .5h3l2 2.500L8 .5h3L8 5l3 4.500H8L6 7 4 9.500H1L4 5z" fill="#fff" stroke="#5b3a3a" strokeWidth=".800" /></svg>
        </WindowButton>
      </WindowButtons>
    </TitleBar>
    <TabStrip>
      <FileTab>Fichier</FileTab>
      {TABS.map((t, i) => <Tab key={t} $active={i === 0}>{t}</Tab>)}
      <TabTools>
        <button aria-label="Réduire le ruban">
          <svg width="10" height="8" viewBox="0 0 10 8"><path d="M1 4.500L5 1l4 3.500V7L5 4 1 7z" fill="#fff" stroke="#444" /></svg>
        </button>
        <button aria-label="Aide">
          <svg width="16" height="16" viewBox="0 0 16 16"><circle cx="8" cy="8" r="7.500" fill="#3f78cf" stroke="#2a5298" /><text x="8" y="12.500" textAnchor="middle" fontFamily="Liberation Sans" fontWeight="700" fontSize="13" fill="#fff">?</text></svg>
        </button>
      </TabTools>
    </TabStrip>
  </Chrome>
);

const RibbonPanel = () => (
  <Ribbon>
    <Group $w={221}>
      <GroupBody>
        <BigButton $w={48}>
          <IconSlot><Paste /></IconSlot>
          <BigLabel>Coller</BigLabel>
          <BigLabel><Caret /></BigLabel>
        </BigButton>
        <Commands>
          <Command disabled><Cut />Couper</Command>
          <Command disabled><Copy />Copier</Command>
          <Command><Brush />Reproduire la mise en forme</Command>
        </Commands>
      </GroupBody>
      <GroupFooter label="Presse-papiers" />
    </Group>

    <Group $w={274}>
      <GroupBody>
        <Rows>
          <Row>
            <Combo $w={86}>
              <ComboSelect aria-label="Police"><option>Book Antiqua</option></ComboSelect>
            </Combo>
            <Combo $w={61}>
              <ComboSelect aria-label="Taille"><option>12</option></ComboSelect>
            </Combo>
            <Tool $w={25} aria-label="Agrandir la police"><SizeA up /></Tool>
            <Tool $w={22} aria-label="Réduire la police"><SizeA /></Tool>
            <Sep />
            <Tool $w={36}><Glyph $b $size={14}>Aa</Glyph><Caret /></Tool>
            <Sep />
            <Tool $w={22} aria-label="Effacer la mise en forme"><Eraser /></Tool>
          </Row>
          <Row>
            <Tool $w={23} $on><Glyph $b $sans $size={13}>G</Glyph></Tool>
            <Tool $w={23}><Glyph $i>I</Glyph></Tool>
            <Tool $w={36}><Glyph $b $size={14} $deco="underline">S</Glyph><span /><span /><Caret /></Tool>
            <Tool $w={24}><Glyph $b $size={12} $deco="line-through">abc</Glyph></Tool>
            <Tool $w={23} aria-label="Indice"><Script /></Tool>
            <Tool $w={23} aria-label="Exposant"><Script sup /></Tool>
            <Sep />
            <Tool $w={33} aria-label="Effets de texte"><GlowA /><Caret /></Tool>
            <Tool $w={35} aria-label="Surbrillance"><Highlight /><Caret /></Tool>
            <Tool $w={32} aria-label="Couleur de police"><FontColor /><Caret /></Tool>
          </Row>
        </Rows>
      </GroupBody>
      <GroupFooter label="Police" />
    </Group>

    <Group $w={282}>
      <GroupBody>
        <Rows>
          <Row>
            <Tool $w={35} aria-label="Puces"><ListIcon kind="dot" /><Caret /></Tool>
            <Tool $w={34} aria-label="Numérotation"><ListIcon kind="num" /><Caret /></Tool>
            <Tool $w={31} aria-label="Liste à plusieurs niveaux"><ListIcon kind="multi" /><Caret /></Tool>
            <Sep />
            <Tool $w={24} aria-label="Diminuer le retrait"><Indent out /></Tool>
            <Tool $w={23} aria-label="Augmenter le retrait"><Indent /></Tool>
            <Sep />
            <Tool $w={23} $on aria-label="De gauche à droite"><Pilcrow dir="ltr" /></Tool>
            <Tool $w={23} aria-label="De droite à gauche"><Pilcrow dir="rtl" /></Tool>
            <Sep />
            <Tool $w={28} aria-label="Trier"><SortIcon /></Tool>
            <Sep />
            <Tool $w={28}><Glyph $size={19}>¶</Glyph></Tool>
          </Row>
          <Row>
            <Tool $w={23} $on aria-label="Aligner à gauche"><AlignIcon kind="left" /></Tool>
            <Tool $w={24} aria-label="Centrer"><AlignIcon kind="center" /></Tool>
            <Tool $w={24} aria-label="Aligner à droite"><AlignIcon kind="right" /></Tool>
            <Tool $w={32} aria-label="Justifier"><AlignIcon kind="full" /><Caret /></Tool>
            <Sep />
            <Tool $w={34} aria-label="Interligne"><LineSpacing /><Caret /></Tool>
            <Sep />
            <Tool $w={35} aria-label="Trame de fond"><Bucket /><Caret /></Tool>
            <Tool $w={32} aria-label="Bordures"><Borders /><span /><Caret /></Tool>
          </Row>
        </Rows>
      </GroupBody>
      <GroupFooter label="Paragraphe" />
    </Group>

    <Group $w={736}>
      <GroupBody>
        <Gallery>
          {STYLES.map((s) => (
            <StyleCard key={s.name} $on={s.on}>
              <Sample $size={s.size} $w={s.w} $b={s.b} $i={s.i} $color={s.color}>{s.text}</Sample>
              <StyleName>{s.name}</StyleName>
            </StyleCard>
          ))}
          <GalleryScroll>
            <GalleryButton aria-label="Styles précédents"><Triangle up w={5} c="#bbb" /></GalleryButton>
            <GalleryButton aria-label="Styles suivants"><Triangle w={5} c="#555" /></GalleryButton>
            <GalleryButton aria-label="Plus de styles">
              <svg width="7" height="7" viewBox="0 0 7 7"><path d="M0 0h7v1H0zM1 3h5L3.500 6z" fill="#555" /></svg>
            </GalleryButton>
          </GalleryScroll>
        </Gallery>
        <BigButton $w={64}>
          <IconSlot><ChangeStyles /></IconSlot>
          <BigLabel>Modifier</BigLabel>
          <BigLabel>les styles<Caret /></BigLabel>
        </BigButton>
      </GroupBody>
      <GroupFooter label="Style" />
    </Group>

    <Group $w={108}>
      <GroupBody>
        <Commands $pad={8}>
          <Command><Binoculars /><span>Rechercher</span><Caret /></Command>
          <Command><Replace /><span>Remplacer</span></Command>
          <Command><Pointer /><span>Sélectionner</span><Caret /></Command>
        </Commands>
      </GroupBody>
      <GroupFooter label="Modification" launcher={false} />
    </Group>
  </Ribbon>
);

const DocumentArea = () => (
  <Workspace>
    <LeftRail>
      <TabSelector aria-label="Type de tabulation">
        <svg width="15" height="15" viewBox="0 0 15 15"><rect x=".5" y=".5" width="14" height="14" fill="#f4f5f6" stroke="#868c96" /><path d="M5.500 5v5.500H10" fill="none" stroke="#333" strokeWidth="2" /></svg>
      </TabSelector>
      <VerticalRuler>
        <VerticalScale>
          {Array.from({ length: 20 }, (_, i) => (
            <VerticalCm key={i}>
              {i ? <UpNumber>{i}</UpNumber> : <span />}
              <Mark $w={2} $h={1} />
              <Mark $w={5} $h={1} />
              <Mark $w={2} $h={1} />
            </VerticalCm>
          ))}
        </VerticalScale>
      </VerticalRuler>
    </LeftRail>

    <Centre>
      <RulerBand>
        <HorizontalRuler>
          <HorizontalScale>
            {MARKS.map((n, i) => (
              <HorizontalCm key={i}>
                {n ? <RulerNumber>{n}</RulerNumber> : <span />}
                <Mark $w={1} $h={2} />
                <Mark $w={1} $h={5} />
                <Mark $w={1} $h={2} />
              </HorizontalCm>
            ))}
          </HorizontalScale>
        </HorizontalRuler>
        <IndentMark $x={121} $y={5}>
          <svg width="9" height="22" viewBox="0 0 9 22" fill="#f1f2f3" stroke="#777b82"><path d="M.5.5h8v4l-4 4-4-4z" /><path d="M.5 16.500v-4l4-4 4 4v4z" /><path d="M.5 16.500h8v5h-8z" /></svg>
        </IndentMark>
        <IndentMark $x={191} $y={14}>
          <svg width="6" height="6" viewBox="0 0 6 6"><path d="M1 0v5h5" fill="none" stroke="#222" strokeWidth="2" /></svg>
        </IndentMark>
        <IndentMark $x={747} $y={13}>
          <svg width="9" height="9" viewBox="0 0 9 9" fill="#d9dbde" stroke="#888c93"><path d="M.5 8.500v-4l4-4 4 4v4z" /></svg>
        </IndentMark>
      </RulerBand>
      <Canvas>
        <Paper>
          <Cursor />
          {NODES.map((n) => (
            <Node key={n.lines.join(" ")} $x={n.x} $y={n.y} $w={n.w} $h={n.h} $blank={n.blank}>
              {n.lines.map((l, i) => <Line key={l} $tall={n.tall && i === n.lines.length - 1}>{l}</Line>)}
            </Node>
          ))}
          <Connectors width="878" height="780" viewBox="0 0 878 780" fill="none" stroke="#111" strokeWidth="1">
            <path d="M265 88.500L190.500 153M193.500 143l-3 10 10.500-1.500" />
            <path d="M537 101.500l79 53M611 144l5.500 10.500-11-.5" />
            <path d="M580.500 213v60M575 265l5.500 8 5.500-8" />
            <path d="M582.500 345v50M577 387l5.500 8 5.500-8" />
            <path d="M539.500 479.500L490.500 512M632 479.500l56 31" />
            <path d="M469 596h6v59h3v1l-6 5-6-5v-1h3zM683 592h6v63h3v1l-6 5-6-5v-1h3z" fill="#000" stroke="none" />
          </Connectors>
        </Paper>
      </Canvas>
    </Centre>

    <ScrollRail>
      <SplitHandle />
      <RailButton aria-label="Règle">
        <svg width="13" height="12" viewBox="0 0 13 12" fill="#f4eef2" stroke="#555a62"><path d="M.5 2.500h11v8H.5z" /><path d="M2.500.5h3v3l4 4v4h-3v-3l-4-4z" strokeDasharray="2 1" /></svg>
      </RailButton>
      <RailButton aria-label="Haut"><Triangle up /></RailButton>
      <Track>
        <TrackSpace $grow={84} />
        <Thumb>
          <svg width="8" height="7" viewBox="0 0 8 7"><path d="M0 .5h8M0 2.500h8M0 4.500h8M0 6.500h8" stroke="#7d828b" /></svg>
        </Thumb>
        <TrackSpace $grow={178} />
      </Track>
      <RailButton aria-label="Bas"><Triangle /></RailButton>
      <RailButton $plain aria-label="Page précédente"><DoubleTriangle up /></RailButton>
      <RailButton $plain aria-label="Parcourir">
        <svg width="8" height="8" viewBox="0 0 8 8"><circle cx="4" cy="4" r="3" fill="#c6cad0" stroke="#555" /></svg>
      </RailButton>
      <RailButton $plain aria-label="Page suivante"><DoubleTriangle /></RailButton>
    </ScrollRail>
  </Workspace>
);

const Status = () => (
  <StatusBar>
    <StatusItem>Page : 1 sur 1</StatusItem>
    <StatusItem>Mots : 0</StatusItem>
    <StatusItem><ProofIcon />Français (France)</StatusItem>
    <StatusRight>
      {["Page", "Lecture", "Web", "Plan", "Brouillon"].map((v, i) => (
        <ViewButton key={v} $on={i === 0} aria-label={v}><ViewIcon kind={i} /></ViewButton>
      ))}
      <ZoomText>110 %</ZoomText>
      <button aria-label="Zoom arrière"><ZoomKnob /></button>
      <ZoomSlider type="range" min={0} max={100} defaultValue={51} aria-label="Zoom" />
      <button aria-label="Zoom avant"><ZoomKnob plus /></button>
    </StatusRight>
  </StatusBar>
);

const TaskbarPanel = () => (
  <Taskbar>
    <StartButton aria-label="Démarrer"><StartOrb /></StartButton>
    <TaskButton aria-label="Internet Explorer"><InternetExplorer /></TaskButton>
    <TaskButton $open aria-label="Explorateur"><Explorer /></TaskButton>
    <TaskButton aria-label="Lecteur multimédia"><MediaPlayer /></TaskButton>
    <TaskButton aria-label="Acrobat"><Acrobat /></TaskButton>
    <TaskButton $open aria-label="Firefox"><Firefox /></TaskButton>
    <TaskButton $open aria-label="Thunderbird"><Thunderbird /></TaskButton>
    <TaskButton $open $active aria-label="Word"><WordTask /></TaskButton>
    <StackEdge />
    <Tray>
      <LanguageTools>
        <Language>FR</Language>
        <TrayButton aria-label="Aide linguistique">
          <svg width="16" height="16" viewBox="0 0 16 16"><circle cx="8" cy="8" r="7.500" fill="#0c1c96" stroke="#c9ced9" /><text x="8" y="12" textAnchor="middle" fontFamily="Liberation Sans" fontWeight="700" fontSize="11" fill="#fff">?</text></svg>
        </TrayButton>
      </LanguageTools>
      <TrayIcons>
        <svg width="10" height="24" viewBox="0 0 10 24"><path d="M3.500 2.500h5v3h-5zM1.500 4.500h5v3h-5z" fill="#7c93ad" stroke="#fff" /><path d="M2 15h6l-3 3z" fill="#fff" /></svg>
        {["Antivirus", "Partage", "HP", "Imprimante", "Sécurité", "Norton", "Réseau", "Volume"].map((t, i) => (
          <TrayButton key={t} aria-label={t}><TrayArt n={i} /></TrayButton>
        ))}
      </TrayIcons>
      <Clock>11:18<br />10/07/2018</Clock>
      <ShowDesktop aria-label="Afficher le Bureau" />
    </Tray>
  </Taskbar>
);

export default function App() {
  return (
    <Desktop>
      <GlobalStyle />
      <Header />
      <RibbonPanel />
      <DocumentArea />
      <Status />
      <TaskbarPanel />
    </Desktop>
  );
}
